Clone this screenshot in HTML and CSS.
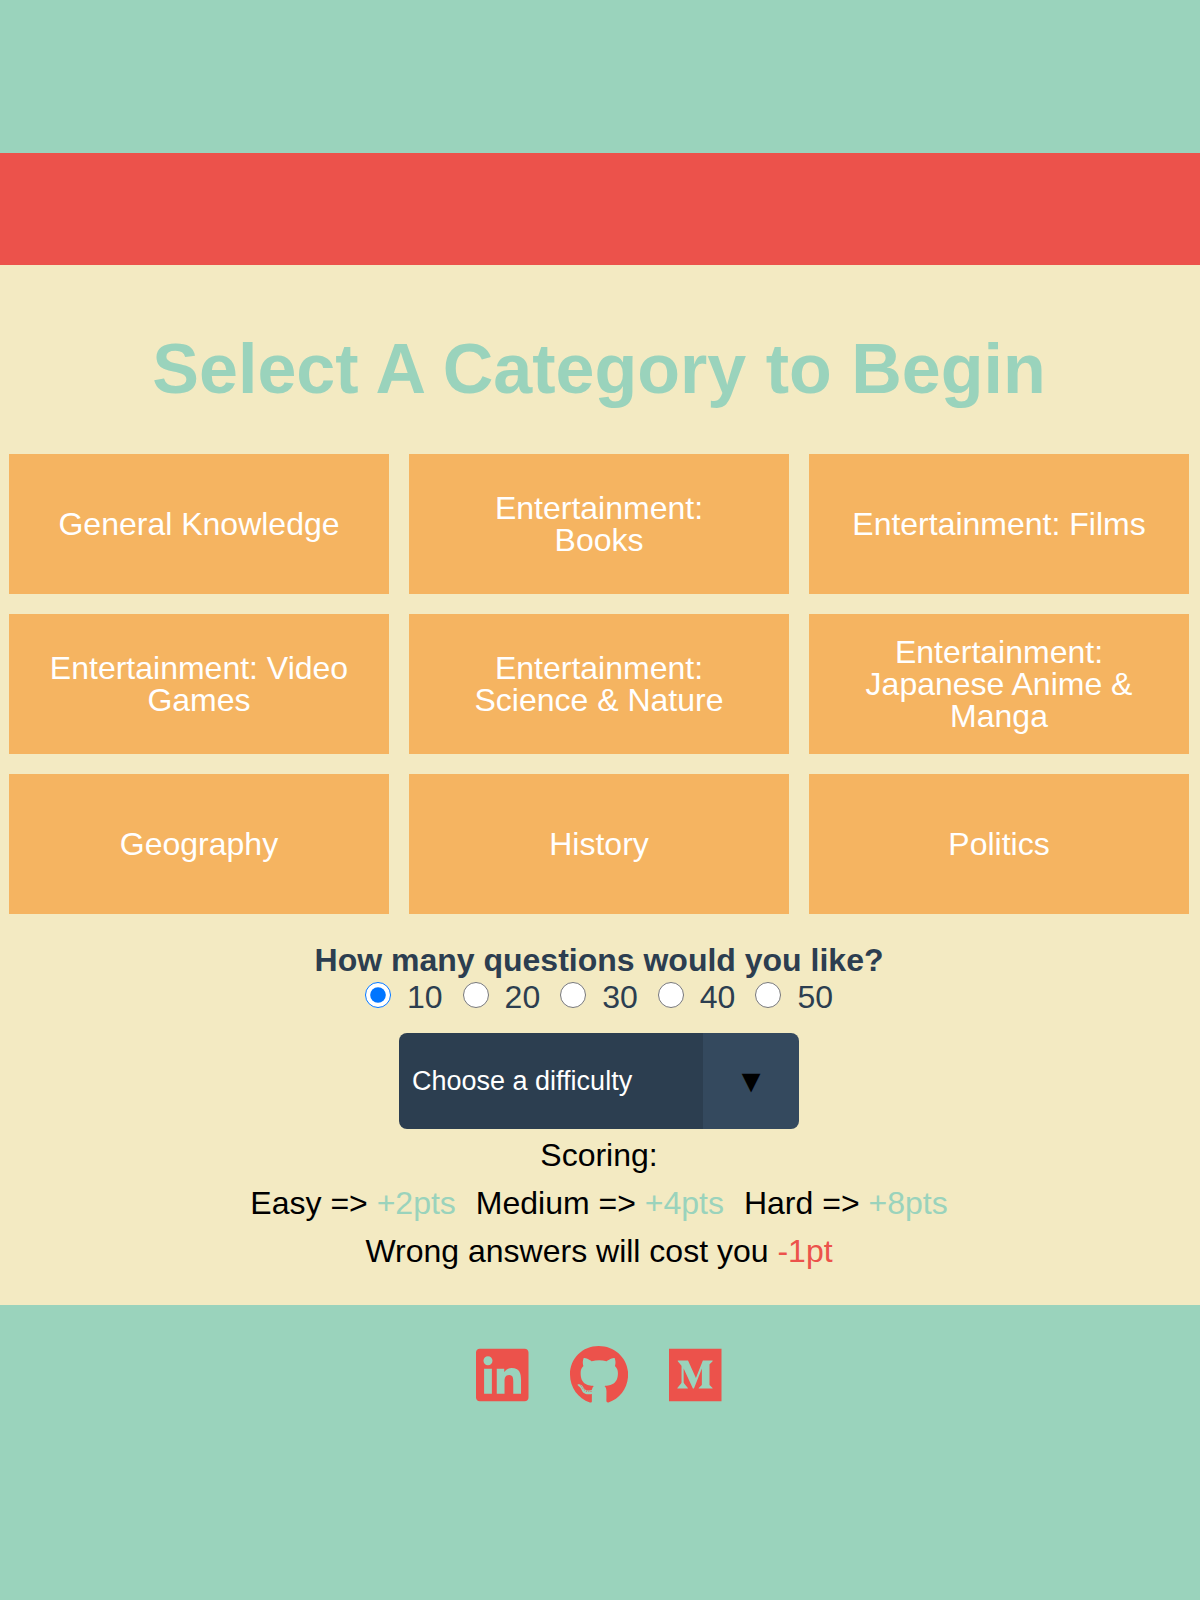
FILE: index.html
```html
<!DOCTYPE html>
<html lang="en">
<head>
  <meta charset="utf-8">
  <meta name="viewport" content="width=device-width, initial-scale=1">
  <title>Trivia</title>
  <link rel="stylesheet" href="styles.css">
</head>
<body>
  <header class="banner"></header>
  <main class="main">
    <h1 class="title">Select A Category to Begin</h1>
    <div class="categories">
      <button class="category" type="button">General Knowledge</button>
      <button class="category" type="button">Entertainment: Books</button>
      <button class="category" type="button">Entertainment: Films</button>
      <button class="category" type="button">Entertainment: Video Games</button>
      <button class="category" type="button">Entertainment: Science &amp; Nature</button>
      <button class="category" type="button">Entertainment: Japanese Anime &amp; Manga</button>
      <button class="category" type="button">Geography</button>
      <button class="category" type="button">History</button>
      <button class="category" type="button">Politics</button>
    </div>
    <form class="options">
      <fieldset class="amount">
        <legend class="question">How many questions would you like?</legend>
        <div class="choices">
          <label class="choice"><input class="radio" type="radio" name="amount" value="10" checked>10</label>
          <label class="choice"><input class="radio" type="radio" name="amount" value="20">20</label>
          <label class="choice"><input class="radio" type="radio" name="amount" value="30">30</label>
          <label class="choice"><input class="radio" type="radio" name="amount" value="40">40</label>
          <label class="choice"><input class="radio" type="radio" name="amount" value="50">50</label>
        </div>
      </fieldset>
      <div class="select">
        <select class="select-box" aria-label="Difficulty">
          <option>Choose a difficulty</option>
          <option>Easy</option>
          <option>Medium</option>
          <option>Hard</option>
        </select>
        <span class="select-arrow" aria-hidden="true">▼</span>
      </div>
    </form>
    <section class="scoring">
      <p class="line">Scoring:</p>
      <p class="line levels">
        <span>Easy =&gt; <span class="gain">+2pts</span></span>
        <span>Medium =&gt; <span class="gain">+4pts</span></span>
        <span>Hard =&gt; <span class="gain">+8pts</span></span>
      </p>
      <p class="line">Wrong answers will cost you <span class="loss">-1pt</span></p>
    </section>
  </main>
  <footer class="footer">
    <a class="social" href="#linkedin" aria-label="LinkedIn">
      <svg class="icon" viewBox="0 0 448 512"><path d="M416 32H31.9C14.3 32 0 46.5 0 64.3v383.400C0 465.500 14.300 480 31.900 480H416c17.600 0 32-14.500 32-32.300V64.300c0-17.800-14.400-32.300-32-32.300zM135.400 416H69V202.200h66.500V416zm-33.200-243c-21.300 0-38.500-17.300-38.500-38.500S80.900 96 102.200 96c21.200 0 38.500 17.300 38.500 38.500 0 21.300-17.200 38.500-38.500 38.500zm282.100 243h-66.400V312c0-24.800-.5-56.700-34.500-56.700-34.600 0-39.900 27-39.900 54.900V416h-66.400V202.200h63.700v29.200h.9c8.900-16.800 30.600-34.500 62.900-34.500 67.200 0 79.700 44.300 79.700 101.900V416z"/></svg>
    </a>
    <a class="social" href="#github" aria-label="GitHub">
      <svg class="icon" viewBox="0 0 496 512"><path d="M165.900 397.400c0 2-2.300 3.600-5.200 3.600-3.300.3-5.600-1.300-5.600-3.600 0-2 2.300-3.600 5.200-3.600 3-.3 5.600 1.300 5.600 3.600zm-31.100-4.500c-.7 2 1.300 4.300 4.300 4.900 2.600 1 5.600 0 6.200-2s-1.300-4.300-4.300-5.200c-2.600-.7-5.500.3-6.200 2.300zm44.200-1.700c-2.900.7-4.900 2.600-4.600 4.900.3 2 2.900 3.300 5.900 2.600 2.900-.7 4.900-2.600 4.600-4.600-.3-1.900-3-3.200-5.900-2.900zM244.800 8C106.100 8 0 113.300 0 252c0 110.900 69.800 205.800 169.500 239.200 12.800 2.300 17.300-5.600 17.300-12.100 0-6.200-.3-40.400-.3-61.400 0 0-70 15-84.700-29.800 0 0-11.400-29.100-27.800-36.600 0 0-22.900-15.700 1.600-15.400 0 0 24.900 2 38.600 25.800 21.900 38.600 58.600 27.500 72.900 20.900 2.300-16 8.800-27.100 16-33.700-55.900-6.200-112.300-14.300-112.300-110.500 0-27.500 7.600-41.300 23.600-58.900-2.600-6.500-11.100-33.300 2.600-67.900 20.900-6.500 69 27 69 27 20-5.600 41.500-8.500 62.800-8.500s42.800 2.900 62.800 8.500c0 0 48.100-33.600 69-27 13.700 34.700 5.200 61.400 2.600 67.900 16 17.700 25.800 31.500 25.800 58.900 0 96.500-58.900 104.200-114.800 110.500 9.200 7.900 17 22.900 17 46.400 0 33.700-.3 75.400-.3 83.600 0 6.500 4.600 14.400 17.300 12.100C428.200 457.800 496 362.900 496 252 496 113.300 383.500 8 244.800 8zM97.200 352.900c-1.300 1-1 3.300.7 5.200 1.600 1.600 3.900 2.300 5.200 1 1.300-1 1-3.300-.7-5.200-1.600-1.600-3.900-2.300-5.200-1zm-10.800-8.100c-.7 1.300.3 2.900 2.300 3.900 1.600 1 3.600.7 4.300-.7.700-1.300-.3-2.900-2.300-3.900-2-.6-3.600-.3-4.300.7zm32.400 35.600c-1.600 1.300-1 4.300 1.300 6.200 2.300 2.300 5.200 2.600 6.500 1 1.300-1.300.7-4.300-1.300-6.200-2.200-2.300-5.200-2.600-6.500-1zm-11.400-14.700c-1.600 1-1.600 3.600 0 5.900 1.600 2.300 4.300 3.300 5.600 2.300 1.600-1.300 1.600-3.900 0-6.200-1.400-2.300-4-3.300-5.600-2z"/></svg>
    </a>
    <a class="social" href="#medium" aria-label="Medium">
      <svg class="icon" viewBox="0 0 448 512"><path d="M0 32v448h448V32H0zm372.200 106.100l-24 23c-2.100 1.600-3.100 4.200-2.700 6.700v169.300c-.4 2.600.6 5.200 2.700 6.700l23.500 23v5.100h-118V367l24.300-23.600c2.400-2.400 2.400-3.100 2.400-6.700V199.800l-67.600 171.600h-9.100L125 199.800v115c-.7 4.800 1 9.700 4.400 13.200l31.600 38.300v5.100H71.200v-5.100l31.600-38.300c3.400-3.500 4.900-8.400 4.100-13.200v-133c.4-3.700-1-7.300-3.800-9.800L75 138.100V133h87.300l67.400 148L289 133.100h83.200v5z"/></svg>
    </a>
  </footer>
</body>
</html>
```
FILE: styles.css
```css
* {
  box-sizing: border-box;
}

body {
  margin: 0;
  min-height: 100vh;
  padding-top: 153px;
  background: #9ad3bc;
  color: #000;
  font-family: "Liberation Sans", Arial, sans-serif;
  font-size: 32px;
  line-height: 32px;
}

.banner {
  height: 112px;
  background: #ec524b;
}

.main {
  padding: 64px 11px 30px 9px;
  background: #f3eac2;
  text-align: center;
}

.title {
  margin: 0 0 45px;
  color: #9ad3bc;
  font-size: 70px;
  line-height: 80px;
}

.categories {
  display: grid;
  grid-template-columns: repeat(3, 1fr);
  gap: 20px;
}

.category {
  min-height: 140px;
  padding: 0 40px;
  border: 0;
  background: #f5b461;
  color: #fff;
  font: inherit;
  cursor: pointer;
}

.options {
  display: flex;
  flex-direction: column;
  align-items: center;
  gap: 20px;
  padding-top: 30px;
}

.amount {
  margin: 0;
  padding: 0;
  border: 0;
  color: #2c3e50;
}

.question {
  padding: 0;
  font-weight: bold;
}

.choices {
  display: flex;
  justify-content: center;
  gap: 20px;
  padding-top: 5px;
}

.choice {
  display: flex;
  align-items: baseline;
  gap: 16px;
}

.radio {
  width: 26px;
  height: 26px;
  margin: 0;
}

.select {
  display: grid;
  grid-template-columns: 1fr 96px;
  width: 400px;
  max-width: 100%;
  height: 96px;
  overflow: hidden;
  border-radius: 8px;
  background: #34495e;
}

.select-box {
  grid-area: 1 / 1 / 2 / 3;
  padding: 0 109px 0 13px;
  border: 0;
  appearance: none;
  background: linear-gradient(to left, #34495e 96px, #2c3e50 96px);
  color: #fff;
  font: inherit;
  font-size: 27px;
}

.select-arrow {
  grid-area: 1 / 2;
  align-self: center;
  color: #000;
  pointer-events: none;
}

.scoring {
  padding-top: 2px;
}

.line {
  margin: 0;
  line-height: 48px;
}

.levels {
  display: flex;
  flex-wrap: wrap;
  justify-content: center;
  column-gap: 20px;
}

.gain {
  color: #9ad3bc;
}

.loss {
  color: #ec524b;
}

.footer {
  display: flex;
  justify-content: center;
  gap: 41px;
  padding: 40px 2px 40px 0;
}

.social {
  color: #ec524b;
}

.icon {
  display: block;
  height: 60px;
  fill: currentColor;
}
```
